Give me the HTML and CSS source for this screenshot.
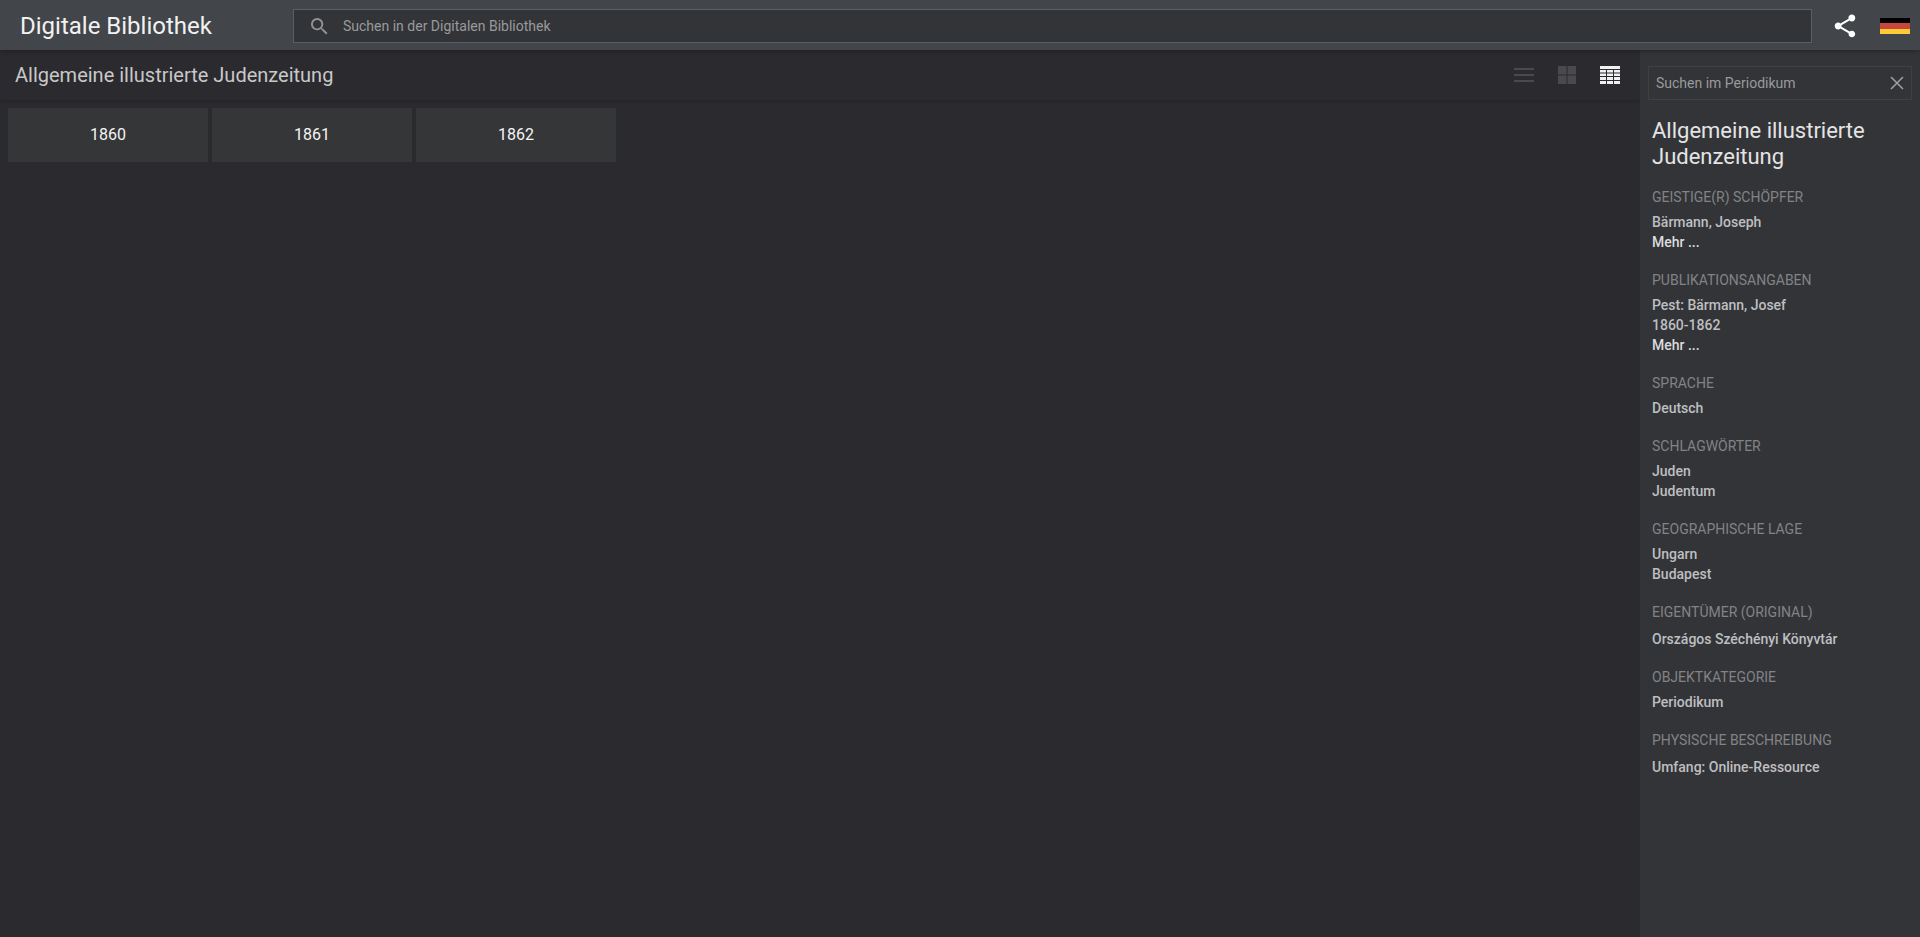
FILE: index.html
```
<!DOCTYPE html>
<html lang="de">
<head>
    <meta charset="UTF-8">
    <meta name="viewport" content="width=device-width, initial-scale=1.0">
    <title>Allgemeine illustrierte Judenzeitung - Digitale Bibliothek</title>
    <link rel="stylesheet" href="styles.css">
</head>
<body>
    <header class="header">
        <a class="logo" href="#">Digitale Bibliothek</a>
        <form class="search">
            <svg class="search-icon" viewBox="3 3 18 18" aria-hidden="true"><path d="M15.5 14h-.79l-.28-.27A6.47 6.47 0 0 0 16 9.5 6.5 6.5 0 1 0 9.5 16c1.61 0 3.09-.59 4.23-1.57l.27.28v.79l5 4.99L20.49 19l-4.99-5zm-6 0C7.01 14 5 11.99 5 9.5S7.01 5 9.5 5 14 7.01 14 9.5 11.99 14 9.5 14z"/></svg>
            <input type="text" placeholder="Suchen in der Digitalen Bibliothek" aria-label="Suchen in der Digitalen Bibliothek">
        </form>
        <div class="header-actions">
            <button type="button" class="icon-button" aria-label="Teilen">
                <svg class="share-icon" viewBox="2.5 1.5 19 21"><path d="M18 16.08c-.76 0-1.44.3-1.96.77L8.91 12.7c.05-.23.09-.46.09-.7s-.04-.47-.09-.7l7.05-4.11c.54.5 1.25.81 2.04.81 1.66 0 3-1.34 3-3s-1.34-3-3-3-3 1.34-3 3c0 .24.04.47.09.7L8.04 9.81C7.5 9.31 6.79 9 6 9c-1.66 0-3 1.34-3 3s1.34 3 3 3c.79 0 1.5-.31 2.04-.81l7.12 4.16c-.05.21-.08.43-.08.65 0 1.61 1.31 2.92 2.92 2.92s2.92-1.31 2.92-2.92-1.31-2.92-2.92-2.92z"/></svg>
            </button>
            <button type="button" class="icon-button" aria-label="Sprache: Deutsch">
                <svg class="flag" viewBox="0 0 30 16"><path fill="#000" d="M0 0h30v5H0z"/><path fill="#c8473c" d="M0 5h30v6H0z"/><path fill="#fdcb38" d="M0 11h30v5H0z"/></svg>
            </button>
        </div>
    </header>

    <div class="page">
        <main class="content">
            <div class="toolbar">
                <h1>Allgemeine illustrierte Judenzeitung</h1>
                <div class="views">
                    <button type="button" class="icon-button" aria-label="Liste">
                        <svg width="20" height="18" viewBox="0 0 20 18"><path d="M0 2h20v2H0zM0 8h20v2H0zM0 14h20v2H0z"/></svg>
                    </button>
                    <button type="button" class="icon-button" aria-label="Kacheln">
                        <svg width="18" height="18" viewBox="0 0 18 18"><path d="M0 0h8.5v8.5H0zM9.5 0H18v8.5H9.5zM0 9.5h8.5V18H0zM9.5 9.5H18V18H9.5z"/></svg>
                    </button>
                    <button type="button" class="icon-button active" aria-label="Kalender">
                        <svg width="20" height="18" viewBox="0 0 20 18"><path d="M0 0h20v3H0z"/><path d="M0 4h6v2.5H0zM7 4h6v2.5H7zM14 4h6v2.5h-6zM0 7.5h6V10H0zM7 7.5h6V10H7zM14 7.5h6V10h-6zM0 11h6v3H0zM7 11h6v3H7zM14 11h6v3h-6zM0 15h6v3H0zM7 15h6v3H7zM14 15h6v3h-6z"/></svg>
                    </button>
                </div>
            </div>
            <nav class="years">
                <a href="#">1860</a>
                <a href="#">1861</a>
                <a href="#">1862</a>
            </nav>
        </main>

        <aside class="sidebar">
            <form class="sidebar-search">
                <input type="text" placeholder="Suchen im Periodikum" aria-label="Suchen im Periodikum">
                <button type="button" class="icon-button" aria-label="Löschen">
                    <svg width="14" height="14" viewBox="0 0 14 14"><path d="M1 1l12 12M13 1L1 13"/></svg>
                </button>
            </form>
            <div class="meta">
                <h2>Allgemeine illustrierte Judenzeitung</h2>
                <dl>
                    <dt>Geistige(r) Schöpfer</dt>
                    <dd>Bärmann, Joseph</dd>
                    <dd><a href="#">Mehr ...</a></dd>
                    <dt>Publikationsangaben</dt>
                    <dd>Pest: Bärmann, Josef</dd>
                    <dd>1860-1862</dd>
                    <dd><a href="#">Mehr ...</a></dd>
                    <dt>Sprache</dt>
                    <dd>Deutsch</dd>
                    <dt>Schlagwörter</dt>
                    <dd>Juden</dd>
                    <dd>Judentum</dd>
                    <dt>Geographische Lage</dt>
                    <dd>Ungarn</dd>
                    <dd>Budapest</dd>
                    <dt>Eigentümer (Original)</dt>
                    <dd class="note">Országos Széchényi Könyvtár</dd>
                    <dt>Objektkategorie</dt>
                    <dd>Periodikum</dd>
                    <dt>Physische Beschreibung</dt>
                    <dd class="note">Umfang: Online-Ressource</dd>
                </dl>
            </div>
        </aside>
    </div>
</body>
</html>
```

FILE: styles.css
```
* {
    box-sizing: border-box;
}

body {
    margin: 0;
    min-height: 100vh;
    display: flex;
    flex-direction: column;
    background-color: #2b2a2e;
    color: #c8c8c8;
    font-family: Roboto, "Liberation Sans", sans-serif;
    font-size: 14px;
    line-height: 20px;
}

a {
    color: inherit;
    text-decoration: none;
}

input {
    flex: 1;
    min-width: 0;
    padding: 0;
    border: none;
    outline: none;
    background: transparent;
    color: #fff;
    font: inherit;
}

input::placeholder {
    color: #999a9c;
    opacity: 1;
}

.icon-button {
    display: flex;
    padding: 0;
    border: none;
    background: none;
    cursor: pointer;
}

/* header */
.header {
    position: relative;
    z-index: 1;
    display: flex;
    align-items: center;
    height: 50px;
    padding: 2px 10px 0 20px;
    background-color: #424549;
    box-shadow: 0 0 6px rgba(0, 0, 0, 0.4);
}

.logo {
    width: 273px;
    color: #f2f2f2;
    font-size: 24px;
    line-height: 30px;
}

.search {
    flex: 1;
    display: flex;
    align-items: center;
    gap: 15px;
    height: 34px;
    padding: 0 16px 0 17px;
    border: 1px solid #5c5f62;
    background-color: #333438;
}

.search-icon {
    width: 17px;
    height: 17px;
    fill: #929395;
}

.header-actions {
    display: flex;
    align-items: center;
    gap: 24px;
    margin-left: 22px;
}

.share-icon {
    width: 22px;
    height: 24px;
    fill: #fff;
}

.flag {
    width: 30px;
    height: 16px;
}

/* main column */
.page {
    flex: 1;
    display: flex;
}

.content {
    flex: 1;
}

.toolbar {
    display: flex;
    align-items: center;
    justify-content: space-between;
    height: 50px;
    padding: 0 20px 0 15px;
    box-shadow: 0 1px 4px rgba(0, 0, 0, 0.2);
}

.toolbar h1 {
    margin: 0;
    font-size: 20px;
    font-weight: 400;
    line-height: 24px;
}

.views {
    display: flex;
    gap: 24px;
}

.views svg {
    fill: #4a4a4e;
}

.views .active svg {
    fill: #f0f0f0;
}

.years {
    display: flex;
    flex-wrap: wrap;
    gap: 4px;
    padding: 8px;
}

.years a {
    width: 200px;
    padding: 17px 0;
    background-color: #353638;
    color: #f4f4f4;
    font-size: 16px;
    font-weight: 400;
    text-align: center;
}

/* sidebar */
.sidebar {
    width: 280px;
    padding: 16px 8px;
    background-color: #333438;
}

.sidebar-search {
    display: flex;
    align-items: center;
    height: 34px;
    padding: 0 7px;
    border: 1px solid #3f4044;
}

.sidebar-search svg {
    fill: none;
    stroke: #a0a1a3;
    stroke-width: 1.5;
}

.meta {
    padding: 18px 4px;
}

.meta h2 {
    margin: 0 0 17px;
    color: #e4e4e4;
    font-size: 22px;
    font-weight: 400;
    line-height: 26px;
}

.meta dl {
    margin: 0;
}

.meta dt {
    margin: 18px 0 5px;
    color: #828385;
    text-transform: uppercase;
}

.meta dt:first-child {
    margin-top: 0;
}

.meta dd {
    margin: 0;
    color: #bebfc0;
    font-weight: 500;
}

.meta dd.note {
    margin-top: 7px;
}

.meta a {
    color: #dcdcdc;
}
```
